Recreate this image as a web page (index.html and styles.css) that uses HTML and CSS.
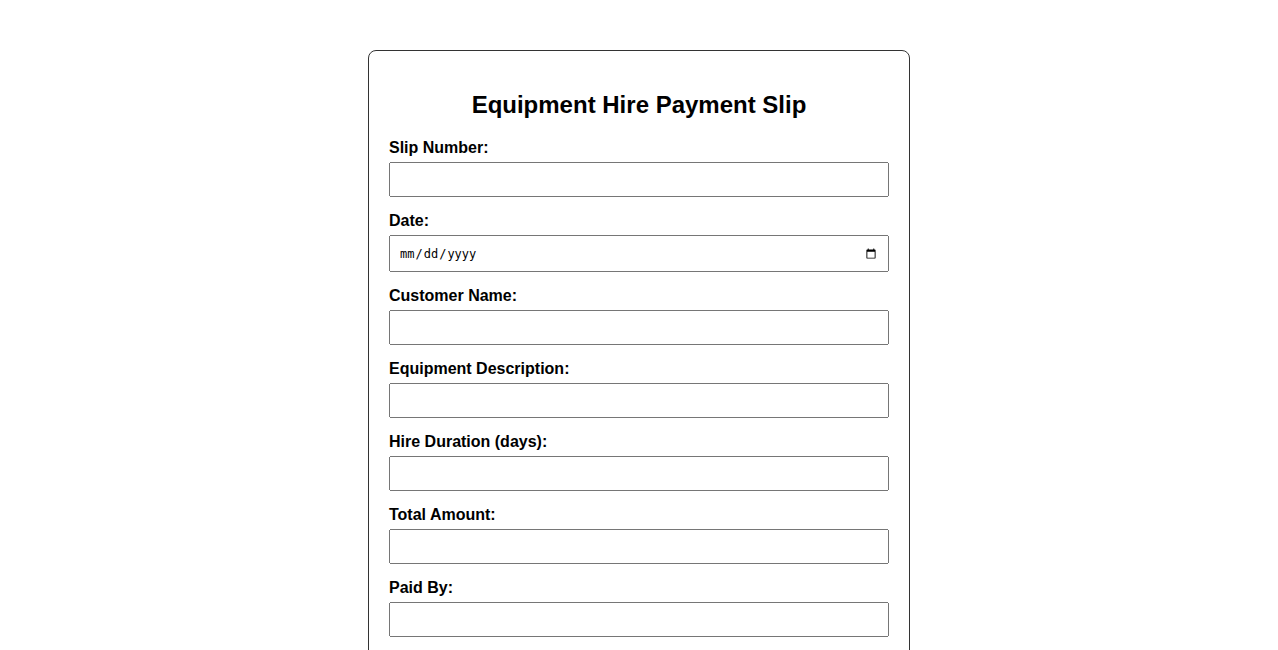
FILE: index.html
```html
<!DOCTYPE html>
<html>
<head>
<meta charset="utf-8">
<title>Equipment Hire Payment Slip</title>
<link rel="stylesheet" href="styles.css">
</head>
<body>
<div class="slip">
  <h2 class="title">Equipment Hire Payment Slip</h2>
  <form>
    <label class="field-label" for="slip">Slip Number:</label>
    <input class="field" type="text" id="slip">
    <label class="field-label" for="date">Date:</label>
    <input class="field field-date" type="date" id="date">
    <label class="field-label" for="customer">Customer Name:</label>
    <input class="field" type="text" id="customer">
    <label class="field-label" for="equip">Equipment Description:</label>
    <input class="field" type="text" id="equip">
    <label class="field-label" for="duration">Hire Duration (days):</label>
    <input class="field" type="text" id="duration">
    <label class="field-label" for="total">Total Amount:</label>
    <input class="field" type="text" id="total">
    <label class="field-label" for="paid">Paid By:</label>
    <input class="field" type="text" id="paid">
  </form>
</div>
</body>
</html>
```
FILE: styles.css
```css
body {
  margin: 0;
  padding: 50px 0 40px;
  font-family: "Liberation Sans", Arial, sans-serif;
  color: #000;
  background: #fff;
}
.slip {
  width: 500px;
  margin: 0 auto;
  padding: 20px;
  border: 1px solid #333;
  border-radius: 8px;
}
.title {
  text-align: center;
  font-size: 24px;
  font-weight: bold;
  margin: 20px 0;
}
.field-label {
  display: block;
  font-weight: bold;
  font-size: 16px;
  margin-bottom: 5px;
}
.field {
  display: block;
  width: 100%;
  box-sizing: border-box;
  padding: 8px;
  margin: 0 0 15px;
}
.field-date {
  font-family: "DejaVu Sans Mono", monospace;
  font-size: 12px;
  height: 37px;
}
```
